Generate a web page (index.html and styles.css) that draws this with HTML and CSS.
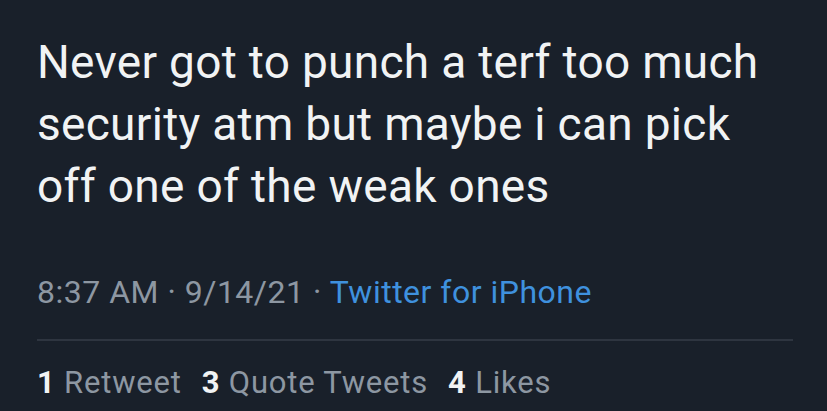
FILE: index.html
```html
<!DOCTYPE html>
<html>
<head>
<meta charset="utf-8">
<link rel="stylesheet" href="styles.css">
</head>
<body>
<div class="tweet">
  <div class="text">Never got to punch a terf too much<br>security atm but maybe i can pick<br>off one of the weak ones</div>
  <div class="meta">8:37 AM · 9/14/21 · <span class="source">Twitter for iPhone</span></div>
  <div class="divider"></div>
  <div class="stats"><span class="stat"><b>1</b> Retweet</span><span class="stat"><b>3</b> Quote Tweets</span><span class="stat"><b>4</b> Likes</span></div>
</div>
</body>
</html>
```
FILE: styles.css
```css
html, body {
  margin: 0;
  padding: 0;
  background: #19202a;
  height: 100%;
}
.tweet {
  padding: 31px 34px 0 37px;
  font-family: Roboto, "Liberation Sans", sans-serif;
}
.text {
  font-size: 46px;
  line-height: 62px;
  letter-spacing: 0.3px;
  color: #f1f3f4;
  white-space: nowrap;
}
.meta {
  margin-top: 56px;
  font-size: 32px;
  line-height: 38px;
  letter-spacing: 0.5px;
  color: #8d97a2;
  white-space: nowrap;
}
.source {
  color: #3f91de;
}
.divider {
  margin-top: 28px;
  height: 2px;
  background: #2e3540;
}
.stats {
  margin-top: 24px;
  font-size: 31px;
  line-height: 36px;
  letter-spacing: 0.8px;
  color: #8d97a2;
  display: flex;
  gap: 20px;
  white-space: nowrap;
}
.stats b {
  color: #f1f3f4;
  font-weight: 700;
}
```
